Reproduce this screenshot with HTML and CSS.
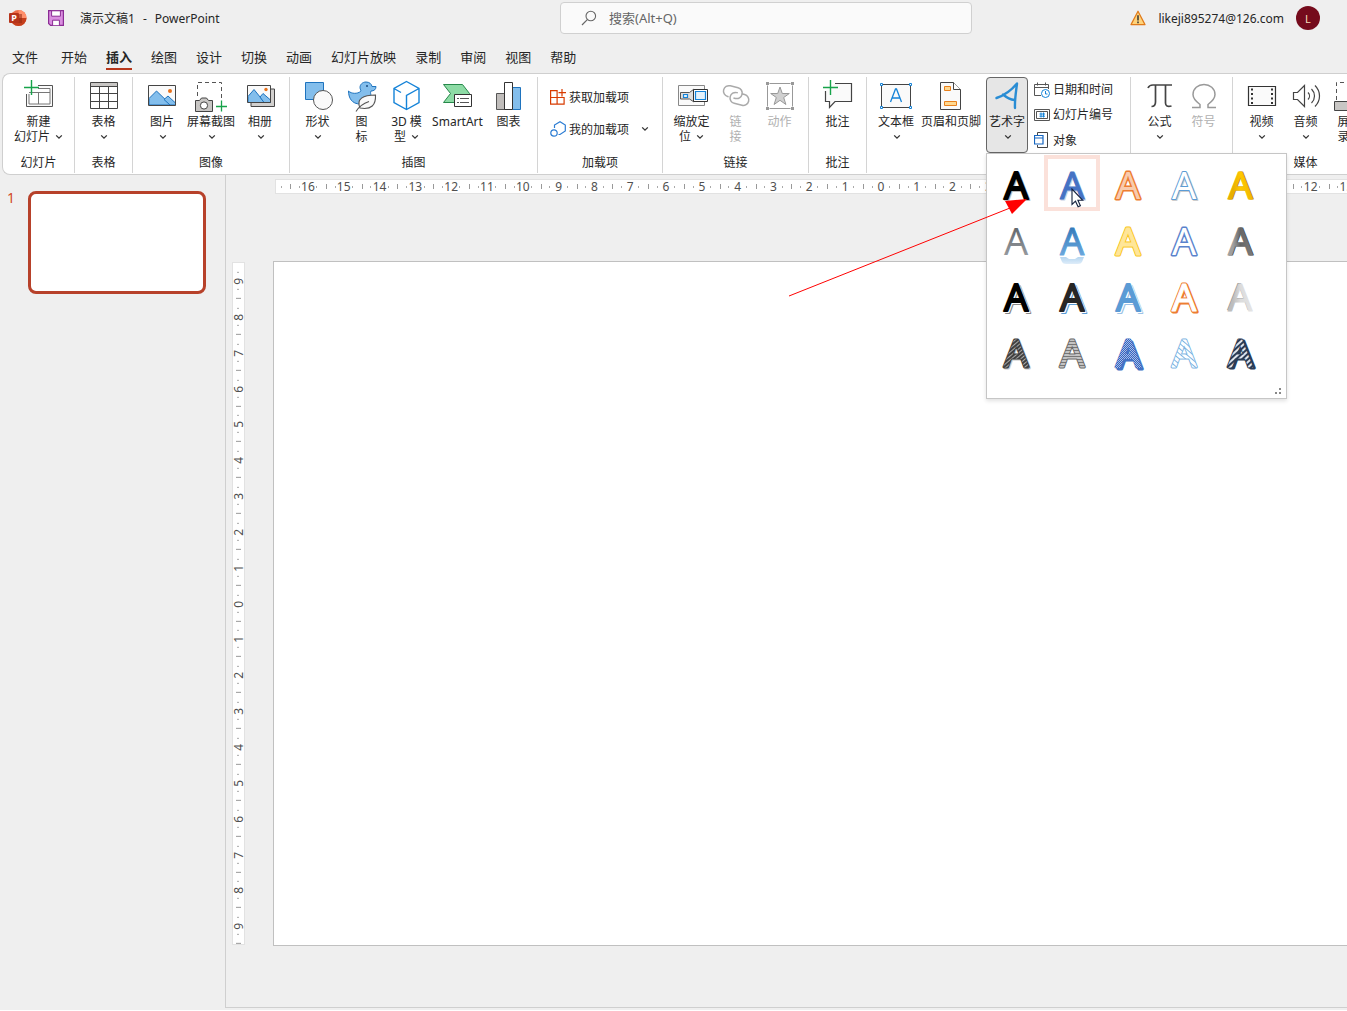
FILE: index.html
```html
<!DOCTYPE html>
<html lang="zh-CN">
<head>
<meta charset="utf-8">
<title>演示文稿1 - PowerPoint</title>
<link rel="stylesheet" href="styles.css">
</head>
<body>
<svg class="defs" width="0" height="0" aria-hidden="true">
  <defs>
    <symbol id="chev" viewBox="0 0 8 6"><path d="M1.2 1.4 4 4.2 6.8 1.4" fill="none" stroke="#333" stroke-width="1.3"/></symbol>
    <linearGradient id="gGrey" x1="0" y1="0" x2="0" y2="1"><stop offset="0.2" stop-color="#5c6166"/><stop offset="1" stop-color="#a9adb2"/></linearGradient>
    <linearGradient id="gBlue" x1="0" y1="0" x2="0" y2="1"><stop offset="0.2" stop-color="#2e75b6"/><stop offset="0.9" stop-color="#74b0e4"/></linearGradient>
    <linearGradient id="gSteel" x1="0" y1="0" x2="1" y2="0"><stop offset="0.2" stop-color="#a0a0a0"/><stop offset="0.5" stop-color="#666"/><stop offset="1" stop-color="#7c7c7c"/></linearGradient>
    <linearGradient id="gGold" x1="0" y1="0" x2="1" y2="0"><stop offset="0.2" stop-color="#e8b000"/><stop offset="0.5" stop-color="#ffc800"/><stop offset="1" stop-color="#f0b800"/></linearGradient>
    <linearGradient id="gSilver" x1="0" y1="0" x2="1" y2="0"><stop offset="0.2" stop-color="#bdbdbd"/><stop offset="0.5" stop-color="#dcdcdc"/><stop offset="1" stop-color="#e4e4e4"/></linearGradient>
    <linearGradient id="gFade" x1="0" y1="0" x2="0" y2="1"><stop offset="0" stop-color="#b4d5f0"/><stop offset="1" stop-color="#dfedf9"/></linearGradient>
    <pattern id="pDark" width="3" height="3" patternUnits="userSpaceOnUse" patternTransform="rotate(-40)"><rect width="3" height="3" fill="#404040"/><rect width="3" height="1" fill="#aaa"/></pattern>
    <pattern id="pLine" width="3" height="3" patternUnits="userSpaceOnUse"><rect width="3" height="3" fill="#c4c4c4"/><rect width="3" height="1" fill="#777"/></pattern>
    <pattern id="pCheck" width="2" height="2" patternUnits="userSpaceOnUse"><rect width="2" height="2" fill="#a9bfe6"/><rect width="1" height="1" fill="#3563c0"/><rect x="1" y="1" width="1" height="1" fill="#3563c0"/></pattern>
    <pattern id="pLight" width="4" height="4" patternUnits="userSpaceOnUse" patternTransform="rotate(40)"><rect width="4" height="4" fill="#fff"/><rect width="4" height="1" fill="#7db4e2"/></pattern>
    <pattern id="pNavy" width="4" height="4" patternUnits="userSpaceOnUse" patternTransform="rotate(-42)"><rect width="4" height="4" fill="#2b3c55"/><rect width="4" height="2" fill="#dfe5ee"/></pattern>
  </defs>
</svg>

<div class="app">
  <header class="titlebar">
    <div class="title-left">
      <svg class="logo" viewBox="0 0 18 18"><circle cx="9.5" cy="9" r="8" fill="#ed6c47"/><path d="M9.5 1a8 8 0 0 1 8 8h-8z" fill="#ff8f6b"/><path d="M1.5 9h16a8 8 0 0 1-16 0z" fill="#c43e1c"/><path d="M6 5h7v9H6z" fill="#8f2a12" opacity=".55"/><rect x="0" y="4" width="10" height="10" rx="1" fill="#b7341a"/><text x="2.3" y="12" font-size="9" font-weight="700" fill="#fff">P</text></svg>
      <button class="save" aria-label="保存"><svg viewBox="0 0 16 16"><path d="M.6.6h14.8v14.8H2.6l-2-2z" fill="#da8ee0" stroke="#8a2c94" stroke-width="1.2"/><path d="M3.6.8h8.8v5.4H3.6z" fill="#fff" stroke="#8a2c94"/><path d="M4.6 15.2v-5h6.8v5" fill="#fff" stroke="#8a2c94"/></svg></button>
      <h1 class="doc-title"><span>演示文稿1</span><span>-</span><span>PowerPoint</span></h1>
    </div>
    <label class="search">
      <svg viewBox="0 0 16 16"><circle cx="9.8" cy="6" r="4.8" fill="none" stroke="#666" stroke-width="1.1"/><path d="M6.3 9.6 1 15" stroke="#666" stroke-width="1.2"/></svg>
      <input type="search" placeholder="搜索(Alt+Q)" aria-label="搜索">
    </label>
    <div class="account">
      <svg class="warn" viewBox="0 0 16 16"><path d="M8 1.2 15 14.6H1z" fill="#ffd37a" stroke="#e07a1a" stroke-width="1.2" stroke-linejoin="round"/><path d="M8 5.2v5.2M8 11.6v1.6" stroke="#333" stroke-width="1.5"/></svg>
      <span>likeji895274@126.com</span>
      <button class="avatar">L</button>
    </div>
  </header>

  <nav class="tabs">
    <a class="file" href="#">文件</a><a href="#">开始</a><a href="#" class="active">插入</a><a href="#">绘图</a><a href="#">设计</a><a href="#">切换</a><a href="#">动画</a><a href="#">幻灯片放映</a><a href="#">录制</a><a href="#">审阅</a><a href="#">视图</a><a href="#">帮助</a>
  </nav>

  <div class="ribbon">
    <section class="group g-slides">
      <div class="tools">
        <button class="big w60">
          <svg class="ico" viewBox="0 0 32 32"><path d="M15 5.500h14.500v21h-26V14" fill="#fafafa" stroke="#555"/><path d="M15 8.500h12v15.500H6V14" fill="#fff" stroke="#777"/><path d="M6 12.500h21M15.500 12.500V24" stroke="#777"/><path d="M8.500 0v15M1 7.500h15" stroke="#17a34a" stroke-width="1.400"/></svg>
          <span>新建<br>幻灯片 <svg class="chev"><use href="#chev"/></svg></span>
        </button>
      </div>
      <h2>幻灯片</h2>
    </section>
    <section class="group g-table">
      <div class="tools">
        <button class="big w46">
          <svg class="ico" viewBox="0 0 32 32"><path d="M2.500 2.500h27v26h-27z" fill="#fff"/><path d="M2.500 2.500h27v4h-27z" fill="#c8c6c4"/><path d="M2.500 2.500h27v26h-27zM2.500 6.500h27M2.500 13.500h27M2.500 21.500h27M11.500 6.500v22M20.500 6.500v22" fill="none" stroke="#444"/></svg>
          <span>表格<br><svg class="chev"><use href="#chev"/></svg></span>
        </button>
      </div>
      <h2>表格</h2>
    </section>
    <section class="group g-image">
      <div class="tools">
        <button class="big w46">
          <svg class="ico" viewBox="0 0 32 32"><path d="M2.500 5.500h27v20h-27z" fill="#fafafa"/><path d="M3 18.500 10.500 11 25 25H3z" fill="#83beec" stroke="#1e73be"/><path d="m18 19.500 4-3.500 7.500 7v2H24z" fill="#83beec" stroke="#1e73be"/><circle cx="24" cy="11" r="2" fill="#e8711c"/><path d="M2.500 5.500h27v20h-27z" fill="none" stroke="#444"/></svg>
          <span>图片<br><svg class="chev"><use href="#chev"/></svg></span>
        </button>
        <button class="big w52">
          <svg class="ico" viewBox="0 0 32 32"><path d="M2.500 16V2.500h24V20" fill="none" stroke="#555" stroke-dasharray="4 3"/><path d="M.5 20.500h4l2-2.500h5l2 2.500h4v11H.5z" fill="#c8c6c4" stroke="#444"/><circle cx="9" cy="25.500" r="3.600" fill="#fff" stroke="#444"/><path d="M26.500 20.500v11M21 26.500h11" stroke="#17a34a" stroke-width="1.300"/></svg>
          <span>屏幕截图<br><svg class="chev"><use href="#chev"/></svg></span>
        </button>
        <button class="big w46">
          <svg class="ico" viewBox="0 0 32 32"><path d="M7 22v4.500h23.500V9H27" fill="#d2d0ce" stroke="#444"/><path d="M3.500 5.500h23v17h-23z" fill="#fafafa"/><path d="m4 16.500 6-7L20.500 22.500H4z" fill="#83beec" stroke="#1e73be"/><path d="m16 17 3-3.500 7.500 6.500v2.500H20z" fill="#83beec" stroke="#1e73be"/><circle cx="22" cy="9.500" r="1.700" fill="#e8711c"/><path d="M3.500 5.500h23v17h-23z" fill="none" stroke="#444"/></svg>
          <span>相册<br><svg class="chev"><use href="#chev"/></svg></span>
        </button>
      </div>
      <h2>图像</h2>
    </section>
    <section class="group g-illus">
      <div class="tools">
        <button class="big w44">
          <svg class="ico" viewBox="0 0 32 32"><path d="M3.500 2.500h18v17h-18z" fill="#83beec" stroke="#1e73be"/><circle cx="21" cy="20" r="9.500" fill="#fafafa" stroke="#555"/></svg>
          <span>形状<br><svg class="chev"><use href="#chev"/></svg></span>
        </button>
        <button class="big w44">
          <svg class="ico" viewBox="0 0 32 32"><path d="M2.500 11c3 3 9 3 12 .5 1-1-.5-2-.5-4 0-3 2.500-5.500 6-5.500s5.500 2 6 4.500h4c0 3-2 4.500-5 4.500-1 2 0 3 0 5 0 5-4 8-11 8C6 24 2.500 18 2.500 11z" fill="#83beec" stroke="#1e73be"/><circle cx="21" cy="6" r="1" fill="#174a80"/><path d="M14 28c-4-9 3-13 15.500-13 .5 10-4 15-15.500 13z" fill="#fafafa" stroke="#555" stroke-width="1.100"/><path d="M10 31.500c3-5 7-8 13-10" fill="none" stroke="#555" stroke-width="1.100"/></svg>
          <span>图<br>标</span>
        </button>
        <button class="big w46">
          <svg class="ico" viewBox="0 0 32 32"><path d="M15.500 1.500 28 8.500v14l-12.500 7-12.500-7v-14zM3 8.500l7 4M28 8.500l-12.500 7v14" fill="none" stroke="#1583d8" stroke-width="1.400"/></svg>
          <span>3D 模<br>型 <svg class="chev"><use href="#chev"/></svg></span>
        </button>
        <button class="big w56">
          <svg class="ico" viewBox="0 0 32 32"><path d="M1.500 4.500h19l7 9-7 9h-19l7-9z" fill="#8ddba5" stroke="#26884a"/><path d="M12.500 14.500h17v12h-17z" fill="#fff" stroke="#333"/><path d="M15 18.500h2M18 18.500h9M15 22.500h2M18 22.500h9" stroke="#555"/></svg>
          <span>SmartArt</span>
        </button>
        <button class="big w46">
          <svg class="ico" viewBox="0 0 32 32"><path d="M3.500 13.500h9v16h-9z" fill="#c0bdbb" stroke="#555"/><path d="M19.500 7.500h8v22h-8z" fill="#83beec" stroke="#1e73be"/><path d="M11.500 2.500h8v27h-8z" fill="#fff" stroke="#333"/></svg>
          <span>图表</span>
        </button>
      </div>
      <h2>插图</h2>
    </section>
    <section class="group g-addin">
      <div class="tools addins">
        <button class="small"><svg class="sico" viewBox="0 0 16 16"><path d="M.6 1.600h6.500v13.500H.6zM.6 8.500h13.500v6.600H7M12 0v7.500M8.500 3.700h7.500" fill="none" stroke="#d83b01" stroke-width="1.200"/></svg>获取加载项</button>
        <button class="small"><svg class="sico" viewBox="0 0 16 16"><path d="M4.500 7V4L10 .8l5.300 3.200v6L10 13.500H8.500" fill="none" stroke="#2b7cd3" stroke-width="1.200"/><circle cx="4" cy="12" r="3.200" fill="none" stroke="#2b7cd3" stroke-width="1.200"/></svg>我的加载项<svg class="chev"><use href="#chev"/></svg></button>
      </div>
      <h2>加载项</h2>
    </section>
    <section class="group g-link">
      <div class="tools">
        <button class="big w44">
          <svg class="ico" viewBox="0 0 32 32"><path d="M2.500 5.500h26v20h-26z" fill="#fafafa" stroke="#888"/><path d="M4.500 12.500h9L18 9v13l-4.500-3h-9z" fill="#e1dfdd" stroke="#555"/><path d="M17.500 9.500h14v12h-14z" fill="#fff" stroke="#333"/><path d="M19.500 11.500h10v8h-10zM7.500 14.500h4v3h-4z" fill="#e5f2fb" stroke="#1583d8" stroke-width="1.200"/></svg>
          <span>缩放定<br>位 <svg class="chev"><use href="#chev"/></svg></span>
        </button>
        <button class="big w44" disabled>
          <svg class="ico" viewBox="0 0 32 32"><g fill="none" stroke="#aaa" stroke-width="1.500" transform="rotate(14 16 16)"><path d="M9 18.500H8a5.500 5.500 0 0 1 0-11h8a5.500 5.500 0 0 1 0 11h-2"/><path d="M21 12.500h3a5.500 5.500 0 0 1 0 11h-8a5.500 5.500 0 0 1 0-11h1"/></g></svg>
          <span>链<br>接</span>
        </button>
        <button class="big w44" disabled>
          <svg class="ico" viewBox="0 0 32 32"><path d="M3.500 3.500h25v25h-25z" fill="none" stroke="#999" stroke-dasharray="21 4" stroke-dashoffset="-2"/><path d="M2 2h3v3H2zM27 2h3v3h-3zM2 27h3v3H2zM27 27h3v3h-3z" fill="#999"/><path d="m16 7 2.300 6.500h7l-5.600 4 2.200 7L16 20.300l-5.900 4.200 2.200-7-5.600-4h7z" fill="#d0d0d0" stroke="#999"/></svg>
          <span>动作</span>
        </button>
      </div>
      <h2>链接</h2>
    </section>
    <section class="group g-note">
      <div class="tools">
        <button class="big w46">
          <svg class="ico" viewBox="0 0 32 32"><path d="M13 3.500h16.500v18H13L7.500 27.500v-6h-4V11" fill="#fafafa" stroke="#444" stroke-width="1.200"/><path d="M8.500 0v15M1 7.500h15" stroke="#17a34a" stroke-width="1.400"/></svg>
          <span>批注</span>
        </button>
      </div>
      <h2>批注</h2>
    </section>
    <section class="group g-text">
      <div class="tools">
        <button class="big w44">
          <svg class="ico" viewBox="0 0 32 32"><path d="M1.500 4.500h29v23h-29z" fill="#fafafa" stroke="#444"/><path d="M.5 3.500h2v2h-2zM29.500 3.500h2v2h-2zM.5 26.500h2v2h-2zM29.500 26.500h2v2h-2z" fill="#fff" stroke="#1583d8"/><path d="m10.500 22 5-13h1l5 13M12.500 18h7" fill="none" stroke="#1583d8" stroke-width="1.300"/></svg>
          <span>文本框<br><svg class="chev"><use href="#chev"/></svg></span>
        </button>
        <button class="big w66">
          <svg class="ico" viewBox="0 0 32 32"><path d="M5.500 2.500h13l7 7v20h-20z" fill="#fafafa" stroke="#444"/><path d="M18.500 2.500v7h7" fill="#fff" stroke="#444"/><path d="M9.500 6.500h6v4h-6zM9.500 21.500h12v4h-12z" fill="#ffd890" stroke="#e8801c"/></svg>
          <span>页眉和页脚</span>
        </button>
        <div class="menu-host">
          <button class="big w42 open" aria-expanded="true">
            <svg class="ico" viewBox="0 0 32 32"><path d="M5.500 18C13 15.500 21 9.500 26 3.500 25 12 23.500 20 24 28M12 14.500c3 2.500 7 5 11.500 5.500" fill="none" stroke="#2a8dd4" stroke-width="2.400" stroke-linecap="round" stroke-linejoin="round"/></svg>
            <span>艺术字<br><svg class="chev"><use href="#chev"/></svg></span>
          </button>
          <div class="gallery">
            <div class="swatches">
              <button aria-label="样式 1"><svg viewBox="0 0 56 56"><text x="17" y="45" class="a s3" fill="#bbb" stroke="#bbb">A</text><text x="16" y="44" class="a s3" fill="#000" stroke="#000">A</text></svg></button>
              <button aria-label="样式 2" class="hover"><svg viewBox="0 0 56 56"><text x="17" y="45" class="a s2" fill="#c8d0e4" stroke="#c8d0e4">A</text><text x="16" y="44" class="a s2" fill="#4472c4" stroke="#4472c4">A</text></svg></button>
              <button aria-label="样式 3"><svg viewBox="0 0 56 56"><text x="16" y="44" class="a s5" fill="#ed7d31" stroke="#ed7d31">A</text><text x="16" y="44" class="a s1" fill="#f8cbad" stroke="#f8cbad">A</text></svg></button>
              <button aria-label="样式 4"><svg viewBox="0 0 56 56"><text x="17" y="45" class="a s3" fill="#ccc" stroke="#ccc">A</text><text x="16" y="44" class="a s3" fill="#5b9bd5" stroke="#5b9bd5">A</text><text x="16" y="44" class="a s1" fill="#fff" stroke="#fff">A</text></svg></button>
              <button aria-label="样式 5"><svg viewBox="0 0 56 56"><text x="17" y="44" class="a s2" fill="#b38600" stroke="#b38600">A</text><text x="16" y="44" class="a s2" fill="url(#gGold)" stroke="url(#gGold)">A</text></svg></button>

              <button aria-label="样式 6"><svg viewBox="0 0 56 56"><text x="16" y="44" class="a s1" fill="url(#gGrey)" stroke="url(#gGrey)">A</text></svg></button>
              <button aria-label="样式 7"><svg viewBox="0 0 56 56"><path d="M16 46h6l3 2h6l3-2h6l-2 5q-1 2-4 2H22q-3 0-4-2z" fill="url(#gFade)"/><text x="16" y="44" class="a s2" fill="url(#gBlue)" stroke="url(#gBlue)">A</text></svg></button>
              <button aria-label="样式 8"><svg viewBox="0 0 56 56"><text x="16" y="44" class="a s5" fill="#f9c420" stroke="#f9c420">A</text><text x="16" y="44" class="a s2" fill="#ffe699" stroke="#ffe699">A</text></svg></button>
              <button aria-label="样式 9"><svg viewBox="0 0 56 56"><text x="16" y="44" class="a s5" fill="#4472c4" stroke="#5a82cc">A</text><text x="16" y="44" class="a s1" fill="#fff" stroke="#fff">A</text></svg></button>
              <button aria-label="样式 10"><svg viewBox="0 0 56 56"><text x="17" y="44" class="a s2" fill="#555" stroke="#555">A</text><text x="16" y="44" class="a s2" fill="url(#gSteel)" stroke="url(#gSteel)">A</text></svg></button>

              <button aria-label="样式 11"><svg viewBox="0 0 56 56"><text x="18" y="46" class="a s3" fill="#888" stroke="#888">A</text><text x="17" y="45" class="a s3" fill="#fff" stroke="#fff">A</text><text x="16" y="44" class="a s3" fill="#000" stroke="#000">A</text></svg></button>
              <button aria-label="样式 12"><svg viewBox="0 0 56 56"><text x="18" y="46" class="a s3" fill="#5b9bd5" stroke="#5b9bd5">A</text><text x="17" y="45" class="a s3" fill="#fff" stroke="#fff">A</text><text x="16" y="44" class="a s3" fill="#262626" stroke="#262626">A</text></svg></button>
              <button aria-label="样式 13"><svg viewBox="0 0 56 56"><text x="18" y="46" class="a s3" fill="#9dc3e6" stroke="#9dc3e6">A</text><text x="17" y="45" class="a s3" fill="#fff" stroke="#fff">A</text><text x="16" y="44" class="a s3" fill="#5b9bd5" stroke="#5b9bd5">A</text></svg></button>
              <button aria-label="样式 14"><svg viewBox="0 0 56 56"><text x="17" y="45" class="a s5" fill="#ed7d31" stroke="#ed7d31">A</text><text x="16" y="44" class="a s5" fill="#ed7d31" stroke="#ed7d31">A</text><text x="16" y="44" class="a s2" fill="#fff" stroke="#fff">A</text></svg></button>
              <button aria-label="样式 15"><svg viewBox="0 0 56 56"><text x="15" y="43" class="a s1" fill="#999" stroke="#999">A</text><text x="16" y="44" class="a s2" fill="url(#gSilver)" stroke="url(#gSilver)">A</text></svg></button>

              <button aria-label="样式 16"><svg viewBox="0 0 56 56"><text x="17" y="45" class="a s4" fill="#ccc" stroke="#ccc">A</text><text x="16" y="44" class="a s4" fill="#404040" stroke="#404040">A</text><text x="16" y="44" class="a s2" fill="url(#pDark)" stroke="url(#pDark)">A</text></svg></button>
              <button aria-label="样式 17"><svg viewBox="0 0 56 56"><text x="16" y="44" class="a s5" fill="#666" stroke="#666">A</text><text x="16" y="44" class="a s2" fill="url(#pLine)" stroke="url(#pLine)">A</text></svg></button>
              <button aria-label="样式 18"><svg viewBox="0 0 56 56"><text x="18" y="46" class="a s4" fill="#4472c4" stroke="#4472c4">A</text><text x="16" y="44" class="a s4" fill="#4472c4" stroke="#4472c4">A</text><text x="16" y="44" class="a s3" fill="url(#pCheck)" stroke="url(#pCheck)">A</text></svg></button>
              <button aria-label="样式 19"><svg viewBox="0 0 56 56"><text x="16" y="44" class="a s5" fill="#7db4e2" stroke="#7db4e2">A</text><text x="16" y="44" class="a s2" fill="url(#pLight)" stroke="url(#pLight)">A</text></svg></button>
              <button aria-label="样式 20"><svg viewBox="0 0 56 56"><text x="18" y="45" class="a s4" fill="#2b3c55" stroke="#2b3c55">A</text><text x="16" y="44" class="a s4" fill="#2b3c55" stroke="#2b3c55">A</text><text x="16" y="44" class="a s2" fill="url(#pNavy)" stroke="url(#pNavy)">A</text></svg></button>
            </div>
            <svg class="grip" viewBox="0 0 8 8"><path d="M5 1h2v2H5zM5 5h2v2H5zM1 5h2v2H1z" fill="#888"/></svg>
          </div>
          <svg class="pointer" viewBox="0 0 13 20"><path d="M1 1v15.500l3.500-3.300 2.600 5.600 2.300-1-2.500-5.500h4.900z" fill="#fff" stroke="#14213d" stroke-width="1.100"/></svg>
          <svg class="arrow" viewBox="0 0 240 98"><path d="M1 97 222 9" stroke="#f00" fill="none"/><path d="M239 0 217 2l7 13z" fill="#f00"/></svg>
        </div>
        <div class="stack">
          <button class="small"><svg class="sico" viewBox="0 0 16 16"><path d="M7 13.500H.5v-11h14V7M.5 5.500h14M3.500.5v3M11.500.5v3" fill="none" stroke="#555"/><circle cx="11.500" cy="11.500" r="4" fill="#fff" stroke="#1583d8"/><path d="M11.500 9v3h2" fill="none" stroke="#1583d8"/></svg>日期和时间</button>
          <button class="small"><svg class="sico" viewBox="0 0 16 16"><path d="M.5 2.500h15v11H.5zM2.500 4.500h11v7h-11z" fill="none" stroke="#555"/><path d="M7 5.500v5M9.500 5.500v5M5.500 7h5.500M5.500 9.200h5.500" stroke="#1583d8"/></svg>幻灯片编号</button>
          <button class="small"><svg class="sico" viewBox="0 0 16 16"><path d="M3.500 3V.5h10v15h-10V13" fill="none" stroke="#444"/><path d="M.5 3.500h8.500v8.500H.5zM.5 6h8.500" fill="#fff" stroke="#1565c0" stroke-width="1.200"/></svg>对象</button>
        </div>
      </div>
    </section>
    <section class="group g-symbol">
      <div class="tools">
        <button class="big w44">
          <svg class="ico" viewBox="0 0 32 32"><path d="M4 8c1-2.500 2-3 5-3h19M11.500 5v17c0 3-1 4.500-4 4.500M21.500 5v18c0 3 2 4 6 3" fill="none" stroke="#444" stroke-width="1.700"/></svg>
          <span>公式<br><svg class="chev"><use href="#chev"/></svg></span>
        </button>
        <button class="big w44" disabled>
          <svg class="ico" viewBox="0 0 32 32"><path d="M4 27.500h8v-3c-4-3-7-6-7-10C5 8.500 10 4.500 16 4.500s11 4 11 10c0 4-3 7-7 10v3h8" fill="none" stroke="#999" stroke-width="1.500"/></svg>
          <span>符号</span>
        </button>
      </div>
    </section>
    <section class="group g-media">
      <div class="tools">
        <button class="big w44">
          <svg class="ico" viewBox="0 0 32 32"><path d="M2.500 6.500h27v19h-27z" fill="#fafafa" stroke="#333" stroke-width="1.200"/><path d="M6 8.500v16M26 8.500v16" stroke="#333" stroke-width="2" stroke-dasharray="2 2.500"/></svg>
          <span>视频<br><svg class="chev"><use href="#chev"/></svg></span>
        </button>
        <button class="big w44">
          <svg class="ico" viewBox="0 0 32 32"><path d="M3.500 12.500h4l7-7v21l-7-7h-4zM18 12.500c2 2 2 5 0 7M21.500 9c4 4 4 10 0 14M25 5.500c6 6 6 15 0 21" fill="none" stroke="#444" stroke-width="1.200"/></svg>
          <span>音频<br><svg class="chev"><use href="#chev"/></svg></span>
        </button>
        <button class="big w44">
          <svg class="ico" viewBox="0 0 32 32"><path d="M2.500 20V2.500h26V20" fill="none" stroke="#555" stroke-dasharray="4 3"/><path d="M.5 21.500h20v9H.5z" fill="#c8c6c4" stroke="#444"/></svg>
          <span>屏幕<br>录制</span>
        </button>
      </div>
      <h2>媒体</h2>
    </section>
  </div>

  <main class="workspace">
    <aside class="slides">
      <span class="num">1</span>
      <button class="thumb" aria-label="幻灯片 1"></button>
    </aside>
    <div class="stage">
      <div class="hruler">
        <i></i><span>16</span><span>15</span><span>14</span><span>13</span><span>12</span><span>11</span><span>10</span><span>9</span><span>8</span><span>7</span><span>6</span><span>5</span><span>4</span><span>3</span><span>2</span><span>1</span><span>0</span><span>1</span><span>2</span><span>3</span><span>4</span><span>5</span><span>6</span><span>7</span><span>8</span><span>9</span><span>10</span><span>11</span><span>12</span><span>13</span><span>14</span><span>15</span><span>16</span><i></i>
      </div>
      <div class="canvas">
        <div class="vruler">
          <span>9</span><span>8</span><span>7</span><span>6</span><span>5</span><span>4</span><span>3</span><span>2</span><span>1</span><span>0</span><span>1</span><span>2</span><span>3</span><span>4</span><span>5</span><span>6</span><span>7</span><span>8</span><span>9</span>
        </div>
        <div class="slide"></div>
      </div>
    </div>
  </main>
</div>
</body>
</html>
```
FILE: styles.css
```css
* { box-sizing: border-box; }

body {
  margin: 0;
  background: #fff;
  color: #262626;
  font: 12px/15px "Noto Sans", "Noto Sans CJK SC", sans-serif;
}

button {
  margin: 0;
  padding: 0;
  border: 0;
  background: none;
  color: inherit;
  font: inherit;
}

a { color: inherit; text-decoration: none; }
svg { display: block; flex: none; }
.defs { position: absolute; }

.app {
  display: flex;
  flex-direction: column;
  min-height: 100vh;
  background: #efefef;
  border-bottom: 1px solid #fff;
  overflow-x: clip;
}

/* Title bar */
.titlebar {
  display: grid;
  grid-template-columns: 560px 412px 1fr;
  align-items: center;
  height: 36px;
}
.title-left { display: flex; align-items: center; padding-left: 9px; }
.logo { width: 18px; height: 18px; }
.save { margin: 0 16px 0 21px; }
.save svg { width: 16px; height: 16px; }
.doc-title {
  display: flex;
  gap: 8px;
  margin: 0;
  font-size: 12px;
  font-weight: 400;
}
.search {
  display: flex;
  align-items: center;
  gap: 12px;
  height: 32px;
  padding-left: 20px;
  border: 1px solid #d0d0d0;
  border-radius: 4px;
  background: #fafafa;
}
.search svg { width: 16px; height: 16px; }
.search input {
  flex: 1;
  border: 0;
  padding: 0;
  outline: 0;
  background: none;
  font: inherit;
  font-size: 13px;
}
.search input::placeholder { color: #666; }
.account {
  display: flex;
  align-items: center;
  justify-content: flex-end;
  padding-right: 27px;
}
.warn { width: 16px; height: 16px; margin-right: 12px; }
.avatar {
  width: 24px;
  height: 24px;
  margin-left: 12px;
  border-radius: 50%;
  background: #750b1c;
  color: #f3d9b8;
  font-size: 11px;
}

/* Tabs */
.tabs {
  display: flex;
  gap: 19px;
  height: 37px;
  padding: 11px 12px 0;
  font-size: 13px;
  line-height: 20px;
}
.tabs a { height: 23px; white-space: nowrap; }
.tabs .file { margin-right: 4px; }
.tabs .active { border-bottom: 2px solid #b7361a; font-weight: 700; }

/* Ribbon */
.ribbon {
  display: flex;
  margin-left: 2px;
  padding: 3px 0 1px;
  border: 1px solid #cfcfcf;
  border-right: 0;
  border-radius: 8px 0 0 8px;
  background: #fff;
}
.group {
  display: flex;
  flex: none;
  flex-direction: column;
  border-right: 1px solid #d4d4d4;
}
.group h2 {
  margin: 0;
  font-size: 12px;
  font-weight: 400;
  line-height: 20px;
  text-align: center;
}
.tools { display: flex; justify-content: center; height: 76px; }
.g-slides { width: 72px; }
.g-table { width: 58px; }
.g-image { width: 157px; }
.g-illus { width: 248px; }
.g-addin { width: 125px; }
.g-link { width: 146px; }
.g-note { width: 58px; }
.g-text { width: 264px; }
.g-symbol { width: 102px; }
.g-media { width: 145px; border-right: 0; }

.big {
  display: flex;
  flex-direction: column;
  align-items: center;
  gap: 2px;
  height: 76px;
  padding-top: 3px;
  white-space: nowrap;
}
.big:disabled { color: #b0b0b0; }
.w42 { width: 42px; }
.w44 { width: 44px; }
.w46 { width: 46px; }
.w52 { width: 52px; }
.w56 { width: 56px; }
.w60 { width: 60px; }
.w66 { width: 66px; }
.ico { width: 32px; height: 32px; }
.sico { width: 16px; height: 16px; }
.chev {
  display: inline-block;
  width: 8px;
  height: 6px;
  margin-left: 2px;
  vertical-align: 1px;
}

.small {
  display: flex;
  align-items: center;
  gap: 3px;
  white-space: nowrap;
}
.small .chev { margin-left: 9px; }
.addins {
  flex-direction: column;
  justify-content: flex-start;
  padding: 4px 0 0 12px;
}
.addins .small { height: 32px; }
.g-text .tools { justify-content: flex-start; padding-left: 7px; }
.stack { display: grid; grid-template-rows: repeat(3, 1fr); margin-left: 6px; }

/* WordArt menu */
.menu-host { position: relative; margin-left: 2px; }
.open {
  outline: 1px solid #666;
  outline-offset: -1px;
  border-radius: 4px;
  background: #e6e6e6;
}
.gallery {
  position: absolute;
  z-index: 2;
  top: 76px;
  left: 0;
  width: 301px;
  padding: 1px 1px 3px;
  border: 1px solid #c6c6c6;
  background: #fff;
  box-shadow: 0 2px 4px rgba(0, 0, 0, .12);
}
.swatches { display: grid; grid-template-columns: repeat(5, 56px); }
.swatches button { height: 56px; }
.swatches .hover { box-shadow: inset 0 0 0 4px #fbe1da; }
.swatches svg { width: 56px; height: 56px; }
.a { font: 38px "Noto Sans", sans-serif; stroke-linejoin: round; }
.s1 { stroke-width: 0; }
.s2 { stroke-width: 1px; }
.s3 { stroke-width: 2px; }
.s4 { stroke-width: 3px; }
.s5 { stroke-width: 3px; }
.grip { width: 8px; height: 8px; margin: 8px 3px 0 auto; }
.pointer {
  position: absolute;
  z-index: 3;
  top: 111px;
  left: 85px;
  width: 13px;
  height: 20px;
}
.arrow {
  position: absolute;
  z-index: 3;
  top: 122px;
  left: -198px;
  width: 240px;
  height: 98px;
  pointer-events: none;
}

/* Workspace */
.workspace { display: flex; flex: 1; margin-bottom: 2px; }
.slides {
  display: flex;
  flex: none;
  align-items: flex-start;
  width: 226px;
  padding: 16px 0 0 7px;
  border-right: 1px solid #cfcfcf;
}
.num { width: 21px; color: #d24726; font-size: 14px; line-height: 14px; }
.thumb {
  width: 178px;
  height: 103px;
  border: 3px solid #b7412a;
  border-radius: 8px;
  background: #fff;
}
.stage {
  flex: 1;
  min-width: 0;
  padding: 4px 0 0 6px;
  border-bottom: 1px solid #cfcfcf;
  overflow: hidden;
}
.hruler {
  display: flex;
  width: 1212px;
  height: 15px;
  margin-left: 43px;
  border: 1px solid #e2e2e2;
  background: #fff;
  color: #505050;
  line-height: 13px;
  text-align: center;
}
.hruler i {
  width: 14px;
  background: linear-gradient(#aaa, #aaa) 40% 50% / 1px 2px no-repeat;
}
.hruler span {
  flex: 1;
  background:
    linear-gradient(#999, #999) 0 50% / 1px 5px no-repeat,
    linear-gradient(#aaa, #aaa) 25% 50% / 1px 2px no-repeat,
    linear-gradient(#aaa, #aaa) 75% 50% / 1px 2px no-repeat;
}
.canvas { display: flex; gap: 28px; margin-top: 67px; }
.vruler {
  display: flex;
  flex: none;
  flex-direction: column;
  width: 13px;
  margin: 1px 0;
  border: 1px solid #e2e2e2;
  background: #fff;
  color: #505050;
}
.vruler span {
  flex: 1;
  writing-mode: vertical-rl;
  transform: rotate(180deg);
  line-height: 11px;
  text-align: center;
  background:
    linear-gradient(#999, #999) 50% 0 / 5px 1px no-repeat,
    linear-gradient(#aaa, #aaa) 50% 25% / 2px 1px no-repeat,
    linear-gradient(#aaa, #aaa) 50% 75% / 2px 1px no-repeat;
}
.slide {
  flex: none;
  width: 1218px;
  aspect-ratio: 16 / 9;
  border: 1px solid #c0c0c0;
  background: #fff;
}
```
